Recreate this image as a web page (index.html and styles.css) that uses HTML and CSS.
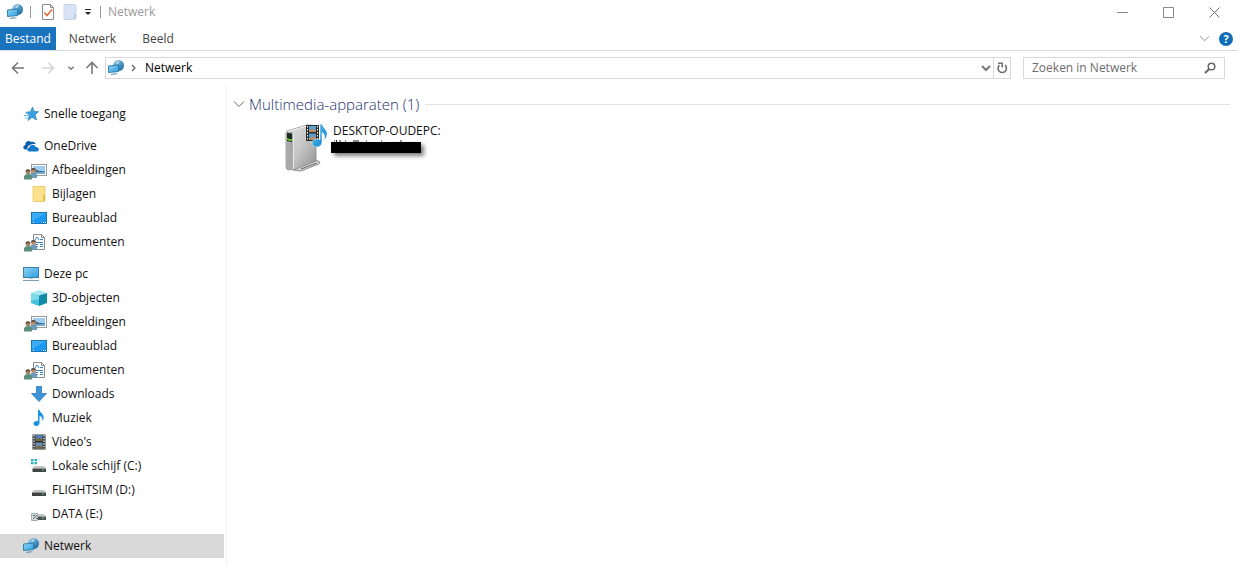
FILE: index.html
```
<!DOCTYPE html>
<html lang="nl">
<head>
    <meta charset="UTF-8">
    <meta name="viewport" content="width=device-width, initial-scale=1.0">
    <title>Netwerk</title>
    <link rel="stylesheet" href="styles.css">
</head>
<body>

    <!-- icon sprite -->
    <svg class="sprite" aria-hidden="true">
        <defs>
            <linearGradient id="screenFill" x1="0" y1="0" x2="1" y2="1">
                <stop offset="0" stop-color="#8fd3f5"/>
                <stop offset="1" stop-color="#2f9fdc"/>
            </linearGradient>
            <linearGradient id="globeFill" x1="0" y1="0" x2="1" y2="1">
                <stop offset="0" stop-color="#a9d3e8"/>
                <stop offset="0.5" stop-color="#4f9ac6"/>
                <stop offset="1" stop-color="#145a92"/>
            </linearGradient>
            <linearGradient id="deviceFill" x1="0" y1="0" x2="1" y2="1">
                <stop offset="0" stop-color="#dedede"/>
                <stop offset="0.5" stop-color="#c6c6c6"/>
                <stop offset="1" stop-color="#8e8e8e"/>
            </linearGradient>
            <linearGradient id="noteFill" x1="0" y1="0" x2="1" y2="1">
                <stop offset="0" stop-color="#5cc4f3"/>
                <stop offset="1" stop-color="#0c7fc7"/>
            </linearGradient>
        </defs>
        <symbol id="network" viewBox="0 0 16 16">
            <circle cx="10.500" cy="5.500" r="5.500" fill="url(#globeFill)"/>
            <path d="M7 2.500c1.500 1 2.500-.5 4-1.500 1 1 0 2.500-1.500 3z" fill="#c4e2ef"/>
            <path d="M.5 6l10-1v6.500l-10 1z" fill="url(#screenFill)" stroke="#2779ab" stroke-width=".9"/>
            <path d="M3 14.500l6.500-.8M6 12.500v2" stroke="#6f9ab3"/>
        </symbol>
        <symbol id="star" viewBox="0 0 16 16">
            <path d="M9.500 1l1.500 4.500 4.500.2-3.500 3 1.600 5.300-4.600-2.800-4 3.300 1.200-5.200L3 6.300l4.500-.6z" fill="#3aa0e0" stroke="#1f7fc2" stroke-width=".7"/>
            <path d="M1 9.500h4M2 12h2.500M2 7h3" stroke="#6dbbe9"/>
        </symbol>
        <symbol id="cloud" viewBox="0 0 16 16">
            <path d="M4 11.500H2.500C-.5 11-.3 7.500 2.200 7.200 2 4 5.500 1.800 8 4c2.300-.8 4.300.5 4.800 2.300C8 5 4.500 7.500 4 11.500z" fill="#0a5ea8"/>
            <path d="M6 13.500c-2.500-.5-2.200-3.700.3-4 .5-3.300 5.500-3.600 6.300-.6 3.400-.3 4.400 3.800 1.400 4.600z" fill="#1478c8"/>
        </symbol>
        <symbol id="people" viewBox="0 0 14 12">
            <circle cx="9.500" cy="2.700" r="2.400" fill="#b98b69"/>
            <path d="M7 2.200c0-3 5-3 5 0l-2-.5z" fill="#5f5145"/>
            <path d="M6 10V7c0-3 7-3 7 0v3z" fill="#6a9cba"/>
            <circle cx="4" cy="4" r="2.400" fill="#a87b5b"/>
            <path d="M1.500 3.500c0-3 5-3 5 0L4 3z" fill="#55524a"/>
            <path d="M0 11.500V9c0-4 8-4 8 0v2.500z" fill="#5b917c"/>
        </symbol>
        <symbol id="photo" viewBox="0 0 16 16">
            <rect x=".5" y="2.500" width="15" height="11" fill="#fff" stroke="#9a9a9a"/>
            <path d="M2 4h12v8H2z" fill="#9dcdf0"/>
            <path d="M2 7.500c3 0 4 .5 6 1.500l6 .5v1H2z" fill="#2f5d86"/>
            <path d="M2 10h12v2H2z" fill="#74a9cc"/>
        </symbol>
        <symbol id="shared-photo" viewBox="0 0 24 20">
            <use href="#photo" x="8" y="0" width="16" height="16"/>
            <use href="#people" x="1" y="6" width="14" height="12"/>
        </symbol>
        <symbol id="folder" viewBox="0 0 16 16">
            <path d="M2 .5h12V14l-1 1.500H2z" fill="#fbe08d" stroke="#ecc65c" stroke-width=".8"/>
            <path d="M12 9h2v6l-2 .5z" fill="#e9bd4c"/>
        </symbol>
        <symbol id="desktop" viewBox="0 0 16 16">
            <rect x=".5" y="2.500" width="15" height="11" fill="#1a9bf0" stroke="#1777b8"/>
            <path d="M1 3h14L1 11z" fill="#3dadf5"/>
            <path d="M2 12.500h1M12 12.500h1M14 12.500h1" stroke="#fff"/>
        </symbol>
        <symbol id="document" viewBox="0 0 16 16">
            <path d="M2.500.5h8l3 3v12h-11z" fill="#fff" stroke="#8a8a8a"/>
            <path d="M10.500.5v3h3" fill="none" stroke="#8a8a8a"/>
            <path d="M4 6l2-3 2 3M9 5.500h3M4 8.500h8M4 10.500h3M9 10.500h3M4 12.500h3M9 12.500h3" fill="none" stroke="#3a87bd"/>
        </symbol>
        <symbol id="shared-document" viewBox="0 0 24 20">
            <use href="#document" x="8" y="0" width="16" height="16"/>
            <use href="#people" x="1" y="6" width="14" height="12"/>
        </symbol>
        <symbol id="computer" viewBox="0 0 16 16">
            <rect x=".5" y="1.500" width="15" height="10" fill="url(#screenFill)" stroke="#3a80ad"/>
            <path d="M6 12h4v1H6z" fill="#b9c4ca"/>
            <path d="M0 14.500h16" stroke="#7ba0b5"/>
        </symbol>
        <symbol id="cube" viewBox="0 0 16 16">
            <path d="M0 3l8-3 8 3-8 2.500z" fill="#a5e7f3"/>
            <path d="M0 3l8 2.500V16l-8-3z" fill="#42c0dc"/>
            <path d="M16 3L8 5.500V16l8-3z" fill="#128bab"/>
            <path d="M0 3l8 2.500V9L0 11z" fill="#7bd9ec"/>
        </symbol>
        <symbol id="download" viewBox="0 0 16 16">
            <path d="M5.500.5h5v7h5L8 15.500.500 7.500h5z" fill="#3d93d8" stroke="#2a78bb" stroke-width=".8"/>
        </symbol>
        <symbol id="note" viewBox="0 0 16 16">
            <path d="M7 0h1.500c.5 3 5 4 4 8.500-.3 1.200-1 2-1.500 2.500 1-3-.5-4.500-2.500-5v7c0 1.800-1.600 3-3.300 3S2.500 15 2.500 13.500c0-2 2.500-3 4.500-2.300z" fill="#1892db"/>
        </symbol>
        <symbol id="film" viewBox="0 0 16 16">
            <path d="M1.500.5h13v15h-13z" fill="#2e2e2e"/>
            <path d="M4.500 1h7v6h-7z" fill="#5482b8"/>
            <path d="M4.500 8.500h7v6.500h-7z" fill="#6e91b4"/>
            <path d="M4.500 5.500l3-2 4 2V7h-7zM4.500 13.500l3-2 4 1V15h-7z" fill="#6f6a45"/>
            <path d="M3 1v14M13 1v14" stroke="#fff" stroke-width="1.200" stroke-dasharray="1.500 1.200"/>
        </symbol>
        <symbol id="drive" viewBox="0 0 16 16">
            <path d="M3 8h10l2 2.500H1z" fill="#c4c4c4"/>
            <path d="M1 10.500h14V14H1z" fill="#3f4345"/>
            <path d="M11 12h2" stroke="#5fe06a"/>
        </symbol>
        <symbol id="system-drive" viewBox="0 0 16 16">
            <path d="M3 8h10l2 2.500H1z" fill="#c4c4c4"/>
            <path d="M1.500 10.500H15V14H1.500z" fill="#3f4345"/>
            <path d="M11 12h2" stroke="#5fe06a"/>
            <path d="M0 1h2.500v2.200H0zM3.500 1H6v2.200H3.500zM0 4h2.500v2.200H0zM3.500 4H6v2.200H3.500z" fill="#26aebd"/>
        </symbol>
        <symbol id="data-drive" viewBox="0 0 16 16">
            <path d="M6 8h7l2 2.500H6z" fill="#c4c4c4"/>
            <path d="M6 10.500h9V14H6z" fill="#4b5052"/>
            <path d="M11 12h2" stroke="#5fe06a"/>
            <path d="M.5 7.500h6v7h-6z" fill="#d5dcde" stroke="#a5adaf"/>
            <path d="M2 13l4-4M2 9.500h2M5 12.500h2" stroke="#5d686b"/>
        </symbol>
        <symbol id="chevron-down" viewBox="0 0 12 12">
            <path d="M1 3.500l5 5 5-5" fill="none" stroke="currentColor"/>
        </symbol>
        <symbol id="caret-down" viewBox="0 0 12 12">
            <path d="M2 4l4 4 4-4" fill="none" stroke="currentColor" stroke-width="2"/>
        </symbol>
        <symbol id="arrow" viewBox="0 0 14 14">
            <path d="M13 7H1.500M7 1.500L1.500 7 7 12.500" fill="none" stroke="currentColor" stroke-width="1.600"/>
        </symbol>
    </svg>

    <header class="titlebar">
        <svg class="icon"><use href="#network"/></svg>
        <span class="divider"></span>
        <button class="quick" aria-label="Eigenschappen">
            <svg class="icon" viewBox="0 0 16 16">
                <path d="M2.500.5h8l3 3v12h-11z" fill="#fff" stroke="#8c8c8c"/>
                <path d="M10.500.5v3h3" fill="none" stroke="#8c8c8c"/>
                <path d="M4.500 8.500l2.500 3 5-6" fill="none" stroke="#dd6a36" stroke-width="1.500"/>
            </svg>
        </button>
        <button class="quick" aria-label="Nieuwe map">
            <svg class="icon" viewBox="0 0 16 16">
                <path d="M2 .5h12V14l-1 1.500H2z" fill="#d9e3f5" stroke="#c8d5ec"/>
                <path d="M12 10h2v5h-2z" fill="#bccce8"/>
            </svg>
        </button>
        <button class="quick quick-menu" aria-label="Werkbalk aanpassen">
            <svg class="icon-small" viewBox="0 0 8 8"><path d="M1 1.500h6" stroke="#222"/><path d="M1 4h6L4 7z" fill="#222"/></svg>
        </button>
        <span class="divider"></span>
        <h1 class="title">Netwerk</h1>
        <div class="window-buttons">
            <button aria-label="Minimaliseren"><svg class="icon-glyph" viewBox="0 0 11 11"><path d="M0 5.500h11" stroke="#888"/></svg></button>
            <button aria-label="Maximaliseren"><svg class="icon-glyph" viewBox="0 0 11 11"><path d="M.5.5h10v10H.5z" fill="none" stroke="#888"/></svg></button>
            <button aria-label="Sluiten"><svg class="icon-glyph" viewBox="0 0 11 11"><path d="M.5.5l10 10M10.500.5l-10 10" stroke="#777"/></svg></button>
        </div>
    </header>

    <nav class="tabs">
        <button class="tab tab-file">Bestand</button>
        <button class="tab">Netwerk</button>
        <button class="tab">Beeld</button>
        <div class="tabs-end">
            <button class="expand" aria-label="Lint uitvouwen"><svg class="icon-glyph"><use href="#chevron-down"/></svg></button>
            <button class="help" aria-label="Help">?</button>
        </div>
    </nav>

    <div class="toolbar">
        <div class="history">
            <button aria-label="Vorige"><svg class="icon-arrow"><use href="#arrow"/></svg></button>
            <button class="disabled" aria-label="Volgende"><svg class="icon-arrow forward"><use href="#arrow"/></svg></button>
            <button class="recent" aria-label="Recente locaties"><svg class="icon-small"><use href="#caret-down"/></svg></button>
            <button class="up" aria-label="Omhoog"><svg class="icon-arrow upward"><use href="#arrow"/></svg></button>
        </div>
        <div class="address">
            <svg class="icon"><use href="#network"/></svg>
            <svg class="icon-small crumb-arrow" viewBox="0 0 8 8"><path d="M2 1l3 3-3 3" fill="none" stroke="#666" stroke-width="1.300"/></svg>
            <button class="crumb">Netwerk</button>
            <button class="address-menu" aria-label="Vorige locaties"><svg class="icon-chevron"><use href="#caret-down"/></svg></button>
            <button class="refresh" aria-label="Vernieuwen">
                <svg class="icon-chevron" viewBox="0 0 12 12"><path d="M3.500 3.200a4.200 4.200 0 1 0 5.500 0" fill="none" stroke="#707070" stroke-width="1.600"/><path d="M2 1.200h4.200v4.300" fill="none" stroke="#707070" stroke-width="1.500"/></svg>
            </button>
        </div>
        <form class="search">
            <input type="text" placeholder="Zoeken in Netwerk" aria-label="Zoeken in Netwerk">
            <button type="button" aria-label="Zoeken">
                <svg class="icon-chevron" viewBox="0 0 12 12"><circle cx="7.500" cy="4.500" r="3.300" fill="none" stroke="#666" stroke-width="1.500"/><path d="M5.200 7L1 11" stroke="#666" stroke-width="2"/></svg>
            </button>
        </form>
    </div>

    <div class="explorer">
        <nav class="tree">
            <ul class="group">
                <li><a href="#" class="root"><svg class="icon"><use href="#star"/></svg>Snelle toegang</a></li>
            </ul>
            <ul class="group">
                <li><a href="#" class="root"><svg class="icon"><use href="#cloud"/></svg>OneDrive</a></li>
                <li><a href="#"><svg class="icon-shared"><use href="#shared-photo"/></svg>Afbeeldingen</a></li>
                <li><a href="#"><svg class="icon"><use href="#folder"/></svg>Bijlagen</a></li>
                <li><a href="#"><svg class="icon"><use href="#desktop"/></svg>Bureaublad</a></li>
                <li><a href="#"><svg class="icon-shared"><use href="#shared-document"/></svg>Documenten</a></li>
            </ul>
            <ul class="group">
                <li><a href="#" class="root"><svg class="icon"><use href="#computer"/></svg>Deze pc</a></li>
                <li><a href="#"><svg class="icon"><use href="#cube"/></svg>3D-objecten</a></li>
                <li><a href="#"><svg class="icon-shared"><use href="#shared-photo"/></svg>Afbeeldingen</a></li>
                <li><a href="#"><svg class="icon"><use href="#desktop"/></svg>Bureaublad</a></li>
                <li><a href="#"><svg class="icon-shared"><use href="#shared-document"/></svg>Documenten</a></li>
                <li><a href="#"><svg class="icon"><use href="#download"/></svg>Downloads</a></li>
                <li><a href="#"><svg class="icon"><use href="#note"/></svg>Muziek</a></li>
                <li><a href="#"><svg class="icon"><use href="#film"/></svg>Video's</a></li>
                <li><a href="#"><svg class="icon"><use href="#system-drive"/></svg>Lokale schijf (C:)</a></li>
                <li><a href="#"><svg class="icon"><use href="#drive"/></svg>FLIGHTSIM (D:)</a></li>
                <li><a href="#"><svg class="icon"><use href="#data-drive"/></svg>DATA (E:)</a></li>
            </ul>
            <ul class="group">
                <li><a href="#" class="root selected"><svg class="icon"><use href="#network"/></svg>Netwerk</a></li>
            </ul>
        </nav>

        <main class="content">
            <h2 class="section-title">
                <svg class="icon-chevron"><use href="#chevron-down"/></svg>
                Multimedia-apparaten (1)
            </h2>
            <a href="#" class="device">
                <svg class="device-icon" viewBox="0 0 44 50">
                    <path d="M12 44l19-7 4 2-1 2-18 7-8-1z" fill="#d4d4d4" stroke="#777" stroke-width=".8"/>
                    <path d="M16 46l16-6" stroke="#666"/>
                    <path d="M2 8L22 2q8 0 9 2v34L11 46l-8 1q-2-1-2-3V10z" fill="url(#deviceFill)" stroke="#7d7d7d" stroke-width=".7"/>
                    <path d="M1.500 9q4-1 7 1v36l-5 1q-2-1-2-3z" fill="#a9a9a9"/>
                    <path d="M8.500 10v36" stroke="#e9e9e9"/>
                    <path d="M3 8.500L22 3" stroke="#f7f7f7"/>
                    <path d="M2 10l5 .5V19l-5-1z" fill="#1f2a1f"/>
                    <path d="M2 15.500q2.500 2.500 5 1" stroke="#7be03c" stroke-width="1.500" fill="none"/>
                    <path d="M21 2h13v16H21z" fill="#2b2b2b"/>
                    <path d="M24 3h7v6h-7zM24 10.500h7V17h-7z" fill="#5b9ed0"/>
                    <path d="M24 7.500l3-2 4 2V9h-7zM24 15.500l4-2 3 1V17h-7z" fill="#b98c6a"/>
                    <path d="M22.500 3v14M32.500 3v14" stroke="#fff" stroke-dasharray="1.500 1.500"/>
                    <path d="M35 1h2c1 4 6 6 5 11-.3 2-1.500 4-3 5 1.500-4 0-6.500-2-7.500V19c0 3-2.500 5-5.500 5S27 22.500 27 20c0-3 4-5 8-3.500z" fill="url(#noteFill)" stroke="#fff" stroke-width=".5"/>
                </svg>
                <span class="device-text">
                    <span class="device-name">DESKTOP-OUDEPC:</span>
                    <svg class="redacted" viewBox="0 0 90 13">
                        <path d="M3 1h1M5.500 0v2M9 0v2M14 1h1M22 1h6M35 1h1M50 1h1M70 0v2" stroke="#222"/>
                        <path d="M0 2h90v11H0z"/>
                    </svg>
                </span>
            </a>
        </main>
    </div>

</body>
</html>
```
FILE: styles.css
```
* {
    box-sizing: border-box;
}
body {
    margin: 0;
    min-height: 100vh;
    display: flex;
    flex-direction: column;
    font-family: "Open Sans", "Noto Sans", sans-serif;
    font-size: 12px;
    line-height: 16px;
    color: #111;
    background-color: #fff;
}
button {
    display: flex;
    align-items: center;
    justify-content: center;
    padding: 0;
    border: none;
    background: none;
    font: inherit;
    color: inherit;
}
svg {
    flex: none;
    display: block;
}
a {
    color: inherit;
    text-decoration: none;
}
.sprite {
    position: absolute;
    width: 0;
    height: 0;
}
.icon {
    width: 16px;
    height: 16px;
}
.icon-shared {
    width: 24px;
    height: 20px;
    margin-left: -8px;
    margin-top: 4px;
}
.icon-small {
    width: 8px;
    height: 8px;
}
.icon-glyph {
    width: 11px;
    height: 11px;
}
.icon-chevron {
    width: 12px;
    height: 12px;
}
.icon-arrow {
    width: 14px;
    height: 14px;
}

/* title bar */
.titlebar {
    display: flex;
    align-items: center;
    height: 24px;
    padding-left: 7px;
}
.divider {
    width: 1px;
    height: 12px;
    margin: 0 7px;
    background-color: #999;
}
.titlebar .divider + .quick {
    margin-left: 2px;
}
.quick {
    margin-right: 6px;
}
.quick-menu {
    margin-right: 1px;
}
.title {
    margin: 0;
    font-size: 12px;
    font-weight: normal;
    color: #999;
}
.window-buttons {
    display: flex;
    margin-left: auto;
}
.window-buttons button {
    width: 46px;
    height: 24px;
}

/* ribbon tabs */
.tabs {
    display: flex;
    align-items: stretch;
    height: 27px;
    padding-top: 3px;
    border-bottom: 1px solid #dadbdc;
}
.tab {
    padding: 0 13px;
    color: #444;
}
.tab-file {
    padding: 0 5px;
    background-color: #1a73bd;
    color: #fff;
}
.tabs-end {
    display: flex;
    align-items: center;
    gap: 9px;
    margin-left: auto;
    padding-right: 4px;
    color: #888;
}
.help {
    width: 14px;
    height: 14px;
    border-radius: 50%;
    background-color: #0f6db8;
    color: #fff;
    font-size: 11px;
    font-weight: bold;
}

/* address bar */
.toolbar {
    display: flex;
    align-items: center;
    height: 34px;
    padding: 0 12px 0 11px;
}
.history {
    display: flex;
    align-items: center;
    width: 94px;
    color: #777;
}
.history .disabled {
    margin-left: 16px;
    color: #d5d5d5;
}
.recent {
    margin-left: 12px;
}
.up {
    margin-left: 10px;
}
.forward {
    transform: rotate(180deg);
}
.upward {
    transform: rotate(90deg);
}
.address {
    flex: 1;
    display: flex;
    align-items: center;
    height: 22px;
    padding-left: 2px;
    border: 1px solid #d9d9d9;
}
.crumb-arrow {
    margin: 0 7px 0 6px;
}
.crumb {
    color: #000;
}
.address-menu {
    margin-left: auto;
    margin-right: 1px;
    color: #777;
}
.refresh {
    align-self: stretch;
    width: 17px;
    border-left: 1px solid #d9d9d9;
}
.search {
    display: flex;
    align-items: center;
    width: 202px;
    height: 22px;
    margin-left: 12px;
    padding: 0 8px;
    border: 1px solid #d9d9d9;
}
.search input {
    flex: 1;
    min-width: 0;
    padding: 0;
    border: none;
    outline: none;
    font: inherit;
}
.search input::placeholder {
    color: #6d6d6d;
}

/* explorer */
.explorer {
    flex: 1;
    display: flex;
}
.tree {
    width: 227px;
    padding: 17px 2px 0 0;
    border-right: 1px solid #f2f2f2;
}
.group {
    margin: 0 0 8px;
    padding: 0;
    list-style: none;
}
.group:last-child {
    margin-bottom: 0;
}
.tree a {
    display: flex;
    align-items: center;
    gap: 5px;
    height: 24px;
    padding-left: 31px;
}
.tree a.root {
    padding-left: 23px;
}
.tree a.selected {
    background-color: #d9d9d9;
}
.content {
    flex: 1;
    padding: 8px 7px 0 6px;
}
.section-title {
    display: flex;
    align-items: center;
    gap: 4px;
    margin: 0;
    font-size: 15px;
    font-weight: 300;
    line-height: 22px;
    color: #1e3070;
}
.section-title::after {
    content: "";
    flex: 1;
    height: 1px;
    margin-left: 2px;
    background-color: #e2e2e2;
}
.section-title .icon-chevron {
    color: #666;
}
.device {
    display: inline-flex;
    gap: 2px;
    margin: 8px 0 0 52px;
}
.device-icon {
    width: 44px;
    height: 50px;
}
.device-text {
    display: flex;
    flex-direction: column;
    gap: 1px;
}
.device-name {
    padding-left: 2px;
}
.redacted {
    width: 90px;
    height: 13px;
    overflow: visible;
    filter: drop-shadow(3px 3px 2px rgba(0, 0, 0, 0.5));
}
```
